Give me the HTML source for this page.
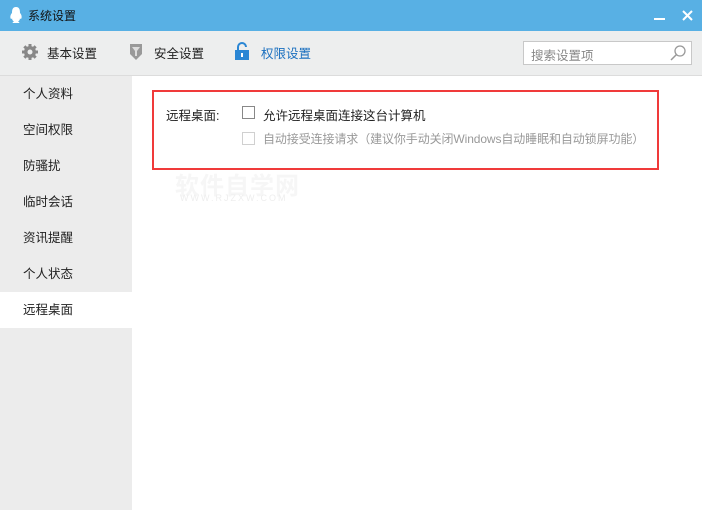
<!DOCTYPE html>
<html><head><meta charset="utf-8"><style>
*{margin:0;padding:0;box-sizing:border-box}
body{width:702px;height:510px;overflow:hidden;background:#fff;font-family:"Liberation Sans","Noto Sans CJK SC",sans-serif;font-size:12px;color:#222;position:relative}
.title{position:absolute;left:0;top:0;width:702px;height:31px;background:#58b0e4}
.title span{position:absolute;left:28px;top:7px;font-size:12px;color:#111}
.tool{position:absolute;left:0;top:31px;width:702px;height:45px;background:#edeeee;border-bottom:1px solid #dcdcdc}
.tool .t{position:absolute;top:12px;font-size:12.5px}
.side{position:absolute;left:0;top:76px;width:132px;height:434px;background:#ececec}
.side div{height:36px;line-height:37px;padding-left:23px;font-size:12.5px}
.side .sel{background:#fff}
.red{position:absolute;left:152px;top:90px;width:507px;height:80px;border:2px solid #f03a3a}
.cb{position:absolute;width:13px;height:13px;border:1px solid #888;background:#fff}
.search{position:absolute;left:523px;top:41px;width:169px;height:24px;border:1px solid #c8c8c8;background:#fff;color:#888;font-size:12.5px;padding:3px 0 0 7px}
</style></head><body>
<div class="title">
<svg style="position:absolute;left:9px;top:6px" width="14" height="18" viewBox="0 0 14 18"><path d="M7 1C3.5 1 3 4 3 7 1 9 1 12 2 13c1 0 1-1 1-1 0 2 1 3 2 3.5-1 .5-2 1-1 1.5h6c1-.5 0-1-1-1.5 1-.5 2-1.5 2-3.5 0 0 0 1 1 1 1-1 1-4-1-6 0-3-.5-6-4-6z" fill="#fff"/></svg>
<span>系统设置</span>
<div style="position:absolute;left:654px;top:18px;width:11px;height:2px;background:#fff"></div>
<svg style="position:absolute;left:682px;top:10px" width="11" height="11"><path d="M1 1L10 10M10 1L1 10" stroke="#fff" stroke-width="2"/></svg>
</div>
<div class="tool">
<svg style="position:absolute;left:21px;top:12px" width="18" height="18" viewBox="0 0 18 18"><g fill="#888"><circle cx="9" cy="9" r="6"/><rect x="7.5" y="1" width="3" height="16"/><rect x="1" y="7.5" width="16" height="3"/><rect x="7.5" y="1" width="3" height="16" transform="rotate(45 9 9)"/><rect x="7.5" y="1" width="3" height="16" transform="rotate(-45 9 9)"/></g><circle cx="9" cy="9" r="2.5" fill="#edeeee"/></svg>
<span class="t" style="left:47px">基本设置</span>
<svg style="position:absolute;left:129px;top:12px" width="14" height="18" viewBox="0 0 14 18"><path d="M1 1h12v10l-6 6-6-6z" fill="#999"/><path d="M3 4h8l-3 4v5H6V8z" fill="#ddd"/></svg>
<span class="t" style="left:154px">安全设置</span>
<svg style="position:absolute;left:235px;top:11px" width="14" height="19" viewBox="0 0 14 19"><path d="M3 8V5a4 4 0 0 1 8 0" stroke="#2a86d4" stroke-width="2" fill="none"/><rect x="0" y="8" width="14" height="10" fill="#2a86d4"/><rect x="6" y="11" width="2" height="4" fill="#fff"/></svg>
<span class="t" style="left:261px;color:#1a6fbf">权限设置</span>
</div>
<div class="search">搜索设置项
<svg style="position:absolute;right:5px;top:3px" width="16" height="16"><circle cx="10" cy="6" r="5" stroke="#999" fill="none" stroke-width="1.3"/><path d="M6.5 9.5L1 15" stroke="#999" stroke-width="1.5"/></svg></div>
<div class="side">
<div>个人资料</div><div>空间权限</div><div>防骚扰</div><div>临时会话</div><div>资讯提醒</div><div>个人状态</div><div class="sel">远程桌面</div>
</div>
<div class="red"></div>
<span style="position:absolute;left:166px;top:105px;font-size:12.5px">远程桌面:</span>
<div class="cb" style="left:242px;top:106px"></div>
<span style="position:absolute;left:263px;top:105px;font-size:12.5px">允许远程桌面连接这台计算机</span>
<div class="cb" style="left:242px;top:132px;border-color:#d0d0d0"></div>
<span style="position:absolute;left:263px;top:130px;font-size:12px;letter-spacing:-0.1px;color:#999;white-space:nowrap">自动接受连接请求（建议你手动关闭Windows自动睡眠和自动锁屏功能）</span>
<span style="position:absolute;left:175px;top:166px;font-size:24px;font-weight:bold;color:#f6f6f6;letter-spacing:1px">软件自学网</span>
<span style="position:absolute;left:180px;top:193px;font-size:9px;color:#eeeeee;letter-spacing:2px">WWW.RJZXW.COM</span>
</body></html>
